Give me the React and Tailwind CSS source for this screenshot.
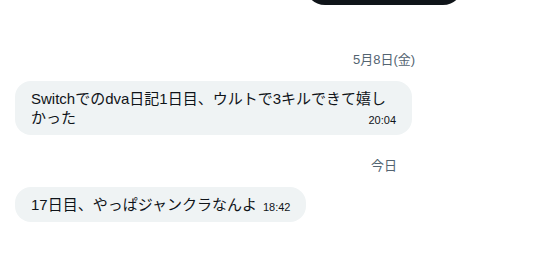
export default function App() {
  const font = { fontFamily: '"Liberation Sans", "Noto Sans CJK JP", Arial, sans-serif' };
  return (
    <div className="w-[546px] h-[267px] bg-white overflow-hidden text-[#0f1419]" style={font}>
      <div className="mt-[-35px] ml-[305px] h-10 w-[158px] rounded-full bg-[#0f1419]" />
      <div className="mt-[47px] ml-[222px] w-[324px] text-center text-[13px] leading-4 text-[#536471]">5月8日(金)</div>
      <div className="mt-[13px] ml-[15px] max-w-[397px] w-fit rounded-[16px] bg-[#eff3f4] px-4 py-2 text-[15px] leading-[19px]">
        <span>Switchでのdva日記1日目、ウルトで3キルできて嬉しかった</span>
        <span className="float-right ml-1.5 relative top-[3px] text-[11px] leading-[19px]">20:04</span>
      </div>
      <div className="mt-[23px] ml-[222px] w-[324px] text-center text-[13px] leading-4 text-[#536471]">今日</div>
      <div className="mt-[13px] ml-[15px] max-w-[397px] w-fit rounded-[16px] bg-[#eff3f4] px-4 py-2 text-[15px] leading-[19px]">
        <span>17日目、やっぱジャンクラなんよ</span>
        <span className="float-right ml-1.5 relative top-[3px] text-[11px] leading-[19px]">18:42</span>
      </div>
    </div>
  );
}
